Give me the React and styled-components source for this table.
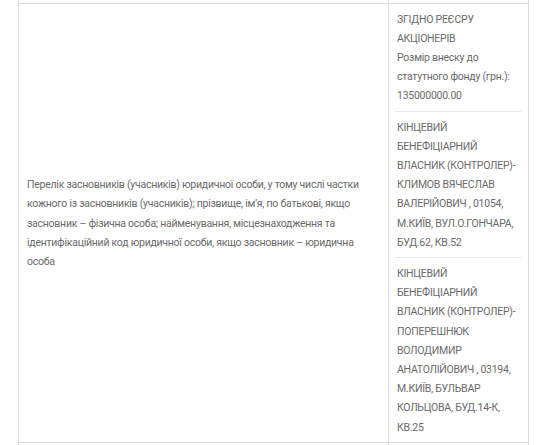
import React from "react";
import styled, { createGlobalStyle } from "styled-components";

const GlobalStyle = createGlobalStyle`
  html, body { margin: 0; padding: 0; background: #ffffff; }
  body { font-family: Roboto, "Open Sans", sans-serif; }
`;

const Page = styled.div`
  padding-left: 18px;
  width: 511px;
`;

const Table = styled.div`
  display: flex;
  flex-direction: column;
  color: #6a6a6a;
  font-size: 10.5px;
  letter-spacing: -0.25px;
  line-height: 19.2px;
`;

const Row = styled.div`
  display: grid;
  grid-template-columns: 370px 141px;
  border-top: ${(p) => (p.$stub ? "none" : "1px solid #dcdcdc")};
  border-bottom: ${(p) => (p.$stub ? "none" : "1px solid #dcdcdc")};
  height: ${(p) => (p.$stub ? p.$stub : "auto")};
`;

const LabelCell = styled.div`
  border-left: 1px solid #dcdcdc;
  padding: 0 8px;
  display: flex;
  align-items: center;
`;

const ValueCell = styled.div`
  border-left: 1px solid #dcdcdc;
  border-right: 1px solid #dcdcdc;
  padding: 0 7px 0 6px;
`;

const Entry = styled.div`
  padding: 5.5px 0 5.5px 2px;
  border-bottom: 1px solid #e8e8e8;
  &:last-child { border-bottom: none; }
`;

const entries = [
  ["ЗГІДНО РЕЄСРУ АКЦІОНЕРІВ", "Розмір внеску до статутного фонду (грн.): 135000000.00"],
  ["КІНЦЕВИЙ БЕНЕФІЦІАРНИЙ ВЛАСНИК (КОНТРОЛЕР)-КЛИМОВ ВЯЧЕСЛАВ ВАЛЕРІЙОВИЧ , 01054, М.КИЇВ, ВУЛ.О.ГОНЧАРА, БУД.62, КВ.52"],
  ["КІНЦЕВИЙ БЕНЕФІЦІАРНИЙ ВЛАСНИК (КОНТРОЛЕР)-ПОПЕРЕШНЮК ВОЛОДИМИР АНАТОЛІЙОВИЧ , 03194, М.КИЇВ, БУЛЬВАР КОЛЬЦОВА, БУД.14-К, КВ.25"],
];

export default function App() {
  return (
    <Page>
      <GlobalStyle />
      <Table>
        <Row $stub="3px">
          <LabelCell />
          <ValueCell />
        </Row>
        <Row>
          <LabelCell>
            Перелік засновників (учасників) юридичної особи, у тому числі частки кожного із засновників (учасників); прізвище, ім’я, по батькові, якщо засновник – фізична особа; найменування, місцезнаходження та ідентифікаційний код юридичної особи, якщо засновник – юридична особа
          </LabelCell>
          <ValueCell>
            {entries.map((lines, i) => (
              <Entry key={i}>
                {lines.map((l, j) => (
                  <div key={j}>{l}</div>
                ))}
              </Entry>
            ))}
          </ValueCell>
        </Row>
        <Row $stub="3px">
          <LabelCell />
          <ValueCell />
        </Row>
      </Table>
    </Page>
  );
}
